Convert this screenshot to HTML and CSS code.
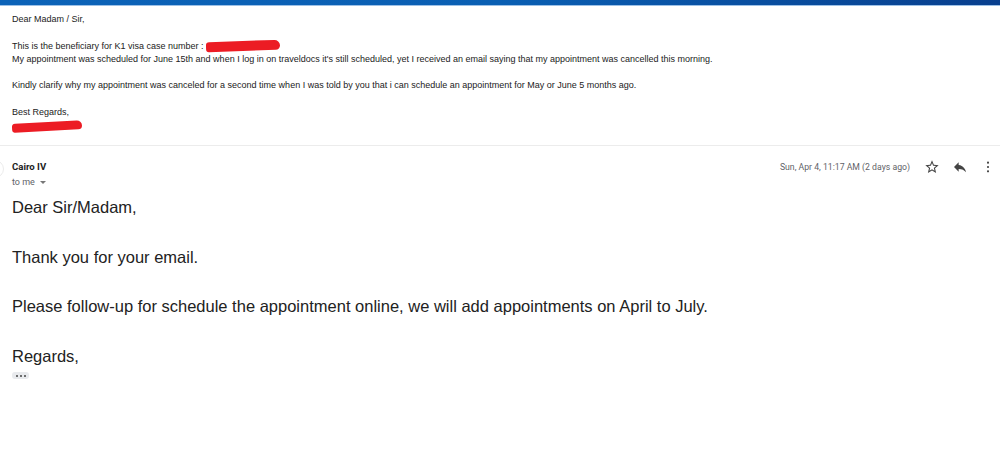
FILE: index.html
```html
<!DOCTYPE html>
<html lang="en">
<head>
    <meta charset="UTF-8">
    <title>Re: K1 visa appointment</title>
    <link rel="stylesheet" href="styles.css">
</head>
<body>
    <div class="topbar"></div>

    <div class="quoted">
        <p>Dear Madam / Sir,</p>
        <p class="blank"></p>
        <p>This is the beneficiary for K1 visa case number :<span class="redact redact-case"></span></p>
        <p>My appointment was scheduled for June 15th and when I log in on traveldocs it's still scheduled, yet I received an email saying that my appointment was cancelled this morning.</p>
        <p class="blank"></p>
        <p>Kindly clarify why my appointment was canceled for a second time when I was told by you that i can schedule an appointment for May or June 5 months ago.</p>
        <p class="blank"></p>
        <p>Best Regards,</p>
        <p><span class="redact redact-name"></span></p>
    </div>

    <div class="message">
        <div class="avatar-edge"></div>
        <div class="msg-header">
            <div class="sender">
                <div class="sender-name">Cairo IV</div>
                <div class="recipient">to me <span class="caret"></span></div>
            </div>
            <div class="meta">
                <span class="date">Sun, Apr 4, 11:17 AM (2 days ago)</span>
                <svg class="icon" width="16" height="16" viewBox="0 0 24 24">
                    <path d="M22 9.24l-7.19-.62L12 2 9.19 8.63 2 9.24l5.46 4.73L5.82 21 12 17.27 18.18 21l-1.63-7.03L22 9.24zM12 15.4l-3.760 2.27 1-4.28-3.32-2.88 4.38-.38L12 6.1l1.71 4.04 4.38.38-3.32 2.88 1 4.28L12 15.4z" fill="#444"/>
                </svg>
                <svg class="icon" width="16" height="16" viewBox="0 0 24 24">
                    <path d="M10 9V5l-7 7 7 7v-4.1c5 0 8.5 1.6 11 5.1-1-5-4-10-11-11z" fill="#444"/>
                </svg>
                <svg class="icon" width="16" height="16" viewBox="0 0 24 24">
                    <circle cx="12" cy="5.5" r="1.6" fill="#444"/>
                    <circle cx="12" cy="12" r="1.6" fill="#444"/>
                    <circle cx="12" cy="18.5" r="1.6" fill="#444"/>
                </svg>
            </div>
        </div>

        <div class="msg-body">
            <p>Dear Sir/Madam,</p>
            <p class="blank"></p>
            <p>Thank you for your email.</p>
            <p class="blank"></p>
            <p>Please follow-up for schedule the appointment online, we will add appointments on April to July.</p>
            <p class="blank"></p>
            <p>Regards,</p>
            <div class="trimmed"><span></span><span></span><span></span></div>
        </div>
    </div>
</body>
</html>
```

FILE: styles.css
```css
* {
    box-sizing: border-box;
    margin: 0;
    padding: 0;
}

body {
    font-family: "Liberation Sans", Arial, sans-serif;
    background-color: #fff;
    color: #222;
    width: 1000px;
    height: 468px;
    overflow: hidden;
}

.topbar {
    height: 6px;
    background: linear-gradient(to right, #0c63b8, #0a5fb3 50%, #083f8e);
    border-bottom: 1px solid #9cc0e6;
}

.quoted {
    padding: 7px 12px 0;
    font-size: 9px;
    line-height: 13.3px;
    color: #222;
    height: 140px;
    border-bottom: 1px solid #ececec;
}

.blank {
    height: 13.3px;
}

.redact {
    display: inline-block;
    background-color: #ec1c24;
    vertical-align: middle;
}

.redact-case {
    width: 74px;
    height: 10px;
    border-radius: 6px 10px 8px 5px;
    margin-left: 2px;
    transform: rotate(-2deg);
}

.redact-name {
    width: 70px;
    height: 9px;
    border-radius: 5px 8px 6px 4px;
    transform: rotate(-3deg);
    margin-top: 1px;
}

.message {
    position: relative;
}

.avatar-edge {
    position: absolute;
    left: -14px;
    top: 14px;
    width: 18px;
    height: 18px;
    border-radius: 50%;
    border: 1px solid #ececec;
}

.msg-header {
    display: flex;
    justify-content: space-between;
    align-items: flex-start;
    padding: 15px 4px 0 12px;
}

.sender-name {
    font-family: Roboto, "Liberation Sans", sans-serif;
    font-weight: bold;
    font-size: 9.6px;
    line-height: 12px;
    color: #222;
}

.recipient {
    font-family: Roboto, "Liberation Sans", sans-serif;
    font-size: 9px;
    line-height: 12px;
    margin-top: 3px;
    color: #5f6368;
}

.caret {
    display: inline-block;
    width: 0;
    height: 0;
    border-left: 3px solid transparent;
    border-right: 3px solid transparent;
    border-top: 3px solid #777;
    vertical-align: middle;
    margin-left: 3px;
}

.meta {
    display: flex;
    align-items: center;
    gap: 12px;
    margin-top: -2px;
}

.date {
    font-family: Roboto, "Liberation Sans", sans-serif;
    font-size: 8.7px;
    color: #5f6368;
    margin-right: 2px;
}

.icon {
    display: block;
}

.msg-body {
    padding: 7px 12px 0;
    font-size: 16.5px;
    line-height: 24.75px;
    color: #222;
}

.msg-body .blank {
    height: 24.75px;
}

.trimmed {
    display: flex;
    align-items: center;
    justify-content: center;
    gap: 2px;
    width: 17px;
    height: 7px;
    margin-top: 4px;
    background-color: #e8eaed;
    border-radius: 3px;
}

.trimmed span {
    width: 2px;
    height: 2px;
    border-radius: 50%;
    background-color: #444;
}
```
